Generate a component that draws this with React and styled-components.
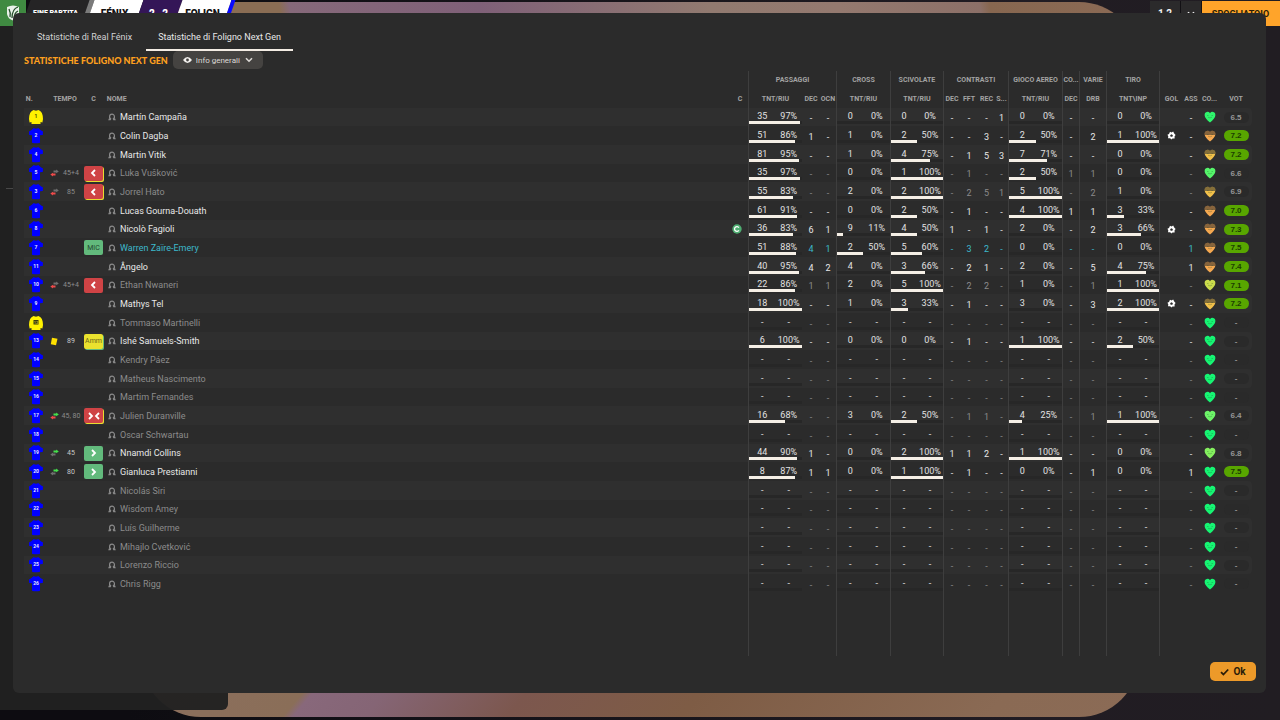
import React, { useState } from "react"
import styled, { createGlobalStyle, css } from "styled-components"

const GlobalStyle = createGlobalStyle`
  * {
    box-sizing: border-box;
  }
  body {
    margin: 0;
    background: #151218;
    color: #e6e6e6;
    font-family: Roboto, "Liberation Sans", sans-serif;
    font-size: 9px;
  }
  button, select {
    font-family: inherit;
    border: 0;
    margin: 0;
  }
`

const Screen = styled.div`
  position: relative;
  display: flex;
  flex-direction: column;
  min-height: 100vh;
  overflow: hidden;
  background: linear-gradient(90deg, #0d0c11 0%, #0d0c11 10%, #211c23 80%, #211d22 100%);
`

const Pitch = styled.div`
  position: absolute;
  inset: 2px 11% 3px 11%;
  border-radius: 60px;
  background:
    linear-gradient(80deg, #8a6d54 14%, #86697a 15%, #7f6078 34%, #917a70 57%, #94796f 70%, #8c7068 84%, #876750 85%, #8b6a55 100%) top / 100% 14px no-repeat,
    linear-gradient(130deg, #8c6f5e 0, #8a6e58 16%, #88687b 17%, #856575 24%, #7c574e 38%, #7e5c45 55%, #8a6a54 85%, #8b6b56 100%) bottom / 100% 26px no-repeat,
    #8a6b56;
`

const TopBar = styled.header`
  position: relative;
  display: flex;
  height: 26px;
  overflow: hidden;
`

const Segment = styled.div`
  position: relative;
  isolation: isolate;
  display: flex;
  align-items: center;
  justify-content: center;
  width: ${p => p.$width}px;
  color: ${p => p.$color || "#fff"};
  font-size: ${p => p.$size || 10}px;
  font-weight: 900;
  white-space: pre;
  &::before {
    content: "";
    position: absolute;
    inset: 0;
    z-index: -1;
    background: ${p => p.$bg};
    transform: skewX(-19deg);
  }
`

const Crest = styled.div`
  display: flex;
  align-items: center;
  justify-content: center;
  width: 26px;
  background: #3f8a41;
`

const TopActions = styled.div`
  display: flex;
  margin-left: auto;
  padding-top: 1px;
`

const TopButton = styled.button`
  display: flex;
  align-items: center;
  justify-content: center;
  width: ${p => p.$width}px;
  padding: 0;
  border-right: 1px solid ${p => (p.$accent ? "#ffa42a" : "#121014")};
  background: ${p => (p.$accent ? "#ffa42a" : "#2b2a2b")};
  color: ${p => (p.$accent ? "#2a1c06" : "#f2f2f2")};
  font-size: ${p => (p.$accent ? 9 : 10)}px;
  font-weight: 700;
  white-space: nowrap;
`

const SidePanel = styled.aside`
  position: relative;
  flex: 1;
  width: 228px;
  margin-bottom: 10px;
  padding-top: 162px;
  border-radius: 0 0 6px 0;
  background: rgba(33, 33, 33, 0.96);
`

const PanelRule = styled.hr`
  width: 12px;
  height: 1px;
  margin: 0 0 0 6px;
  border: 0;
  background: #484848;
`

const Overlay = styled.div`
  position: fixed;
  inset: 0;
  display: flex;
  padding: 13px 14px 27px 13px;
`

const Modal = styled.main`
  display: flex;
  flex-direction: column;
  flex: 1;
  min-width: 0;
  padding: 10px 10px 12px 11px;
  border-radius: 6px;
  background: #2b2b2b;
`

const Tabs = styled.div`
  display: flex;
  gap: 2px;
  padding-left: 1px;
`

const Tab = styled.button`
  height: 28px;
  padding: 2px 12px 0;
  border-bottom: 2px solid ${p => (p.$active ? "#f3ece4" : "transparent")};
  background: none;
  color: ${p => (p.$active ? "#e8e8e8" : "#d2d2d2")};
  font-size: 9px;
`

const TitleRow = styled.div`
  display: flex;
  align-items: center;
  gap: 5px;
  height: 20px;
  padding-bottom: 2px;
`

const Title = styled.h1`
  margin: 0;
  color: #ffa01e;
  font-family: Lato, sans-serif;
  font-size: 9px;
  font-weight: 900;
`

const ViewPicker = styled.label`
  display: flex;
  align-items: center;
  gap: 4px;
  width: 90px;
  height: 18px;
  padding: 0 10px;
  border-radius: 5px;
  background: #454341;
  color: #dcd9d6;
  select {
    flex: 1;
    min-width: 0;
    padding: 0;
    appearance: none;
    background: none;
    color: inherit;
    font-size: 8px;
  }
`

const TableWrap = styled.div`
  flex: 1;
  min-height: 0;
  margin-right: 4px;
  overflow: hidden;
`

const Table = styled.table`
  width: 100%;
  height: 100%;
  table-layout: fixed;
  border-collapse: separate;
  border-spacing: 0;
  text-align: center;
`

const line = css`
  border-left: ${p => (p.$line ? "1px solid #3e3e3e" : "0")};
`

const Th = styled.th`
  ${line}
  height: ${p => (p.$group ? 18 : 19)}px;
  padding: 0;
  overflow: hidden;
  color: #a3a3a3;
  font-size: 7px;
  font-weight: 700;
  line-height: 10px;
  white-space: nowrap;
  text-align: ${p => p.$align || "center"};
`

const Row = styled.tr`
  height: 19px;
  color: ${p => ({ dim: "#8b8b8b", on: "#e8e8e8", picked: "#3cb9cc" })[p.$tone]};
  &:nth-child(3n + 1) {
    height: 18px;
  }
  &:nth-child(odd) td {
    background: #2f2f2f;
  }
  td:last-child {
    border-radius: 0 4px 4px 0;
  }
`

const Td = styled.td`
  ${line}
  padding: ${p => (p.$stat ? "2px 0 0" : "0")};
  line-height: 10px;
  vertical-align: middle;
  white-space: nowrap;
`

const Filler = styled.td`
  ${line}
  padding: 0;
`

const Center = styled.div`
  display: flex;
  align-items: center;
  justify-content: center;
`

const Tempo = styled.div`
  display: grid;
  grid-template-columns: 12px 1fr;
  align-items: center;
  justify-items: center;
  color: ${p => (p.$bright ? "#c8c8c8" : "#8b8b8b")};
  font-size: 7px;
`

const Status = styled.div`
  display: flex;
  align-items: center;
  justify-content: center;
  width: 19px;
  height: 15px;
  margin: 0 auto;
  border-radius: 2px;
  background: ${p => ({ out: "#cf4345", in: "#62ba7c", booked: "#eae22e" })[p.$kind]};
  box-shadow: ${p => (p.$edge ? `1px 1px 0 ${p.$edge}` : "none")};
  color: ${p => ({ out: "#fff", in: "#23462e", booked: "#69661a" })[p.$kind]};
  font-size: 7px;
`

const Player = styled.div`
  display: flex;
  align-items: center;
  gap: 4px;
  padding-left: 3px;
`

const Pair = styled.div`
  display: grid;
  grid-template-columns: 1fr 1fr;
  padding-top: 1px;
  color: #e2e2e2;
`

const Track = styled.div`
  grid-column: 1 / 3;
  height: 3px;
  background: #272727;
`

const Bar = styled.div`
  height: 3px;
  background: #f5efe6;
`

const Vote = styled.div`
  width: 25px;
  height: 11px;
  margin: 0 auto;
  border-radius: 6px;
  background: ${p => (p.$good ? "#58a600" : "#2a2a2a")};
  color: ${p => (p.$good ? "#1c3d02" : "#959595")};
  font-family: "Liberation Sans", sans-serif;
  font-size: 8px;
  font-weight: 700;
  line-height: 12px;
`

const Footer = styled.footer`
  display: flex;
  justify-content: flex-end;
  padding-top: 6px;
`

const OkButton = styled.button`
  display: flex;
  align-items: center;
  justify-content: center;
  gap: 4px;
  width: 46px;
  height: 19px;
  padding: 0;
  border-radius: 5px;
  background: #ed9a29;
  color: #2b1d08;
  font-size: 10px;
  font-weight: 700;
`

const Icon = styled.svg`
  display: block;
  flex: none;
`

const Shirt = ({ n, keeper }) => (
  <Icon width="14" height="16" viewBox="0 0 14 16">
    {keeper ? (
      <path d="M4.500 1 7 1.800 9.500 1C12.500 2 14 5 14 10L13.400 13.500 11.500 13V15H2.500V13L.6 13.500 0 10C0 5 1.500 2 4.500 1Z" fill="#fff200" />
    ) : (
      <path d="M4.800 0Q7 1.500 9.200 0L12.200 2.400 14 3.400 13.800 7 11 7.300V14.800Q7 15.800 3 14.800V7.300L.2 7 0 3.400 1.800 2.400Z" fill="#0000ff" />
    )}
    {keeper && n > 9 && <rect x="4.500" y="5" width="5" height="4.500" fill="#3a390c" />}
    <text x="7" y="9" textAnchor="middle" fontSize={keeper && n > 9 ? 4 : 5} fontWeight="700" fill={keeper ? (n > 9 ? "#b8b02c" : "#4a4700") : "#e6e6ff"}>
      {n}
    </text>
  </Icon>
)

const Swap = ({ kind }) => (
  <Icon width="9" height="8" viewBox="0 0 9 8">
    <path d="M3.500 1.600H6.200V.6L8.800 2.400 6.200 4.200V3.500H3.500Z" fill={kind === "out" ? "#6f6f6f" : "#45df4c"} />
    <path d="M5.500 6.500H3V7.400L.3 5.600 3 3.800V4.500H5.500Z" fill={kind === "in" ? "#6f6f6f" : "#f04a4a"} />
  </Icon>
)

const Card = () => (
  <Icon width="8" height="9" viewBox="0 0 8 9">
    <path d="M2 .8 7.500 1.800 6 8.200.8 7.200Z" fill="#ffe000" />
  </Icon>
)

const Arrow = ({ left }) => (
  <Icon width="7" height="8" viewBox="0 0 7 8">
    <path d={left ? "M5 1 2 4 5 7" : "M2 1 5 4 2 7"} fill="none" stroke="#fff" strokeWidth="1.800" />
  </Icon>
)

const Face = () => (
  <Icon width="8" height="8" viewBox="0 0 8 8">
    <path d="M1.600 5V3.600A2.400 2.400 0 0 1 6.400 3.600V5" fill="none" stroke="#8a8a8a" strokeWidth="1.200" />
    <path d="M.2 7.200Q.4 5.200 2.400 4.600L3.400 5.800 2.600 7.200ZM7.800 7.200Q7.600 5.200 5.600 4.600L4.600 5.800 5.400 7.200Z" fill="#8a8a8a" />
  </Icon>
)

const Captain = () => (
  <Icon width="10" height="10" viewBox="0 0 10 10">
    <circle cx="5" cy="5" r="4.700" fill="#4fae72" />
    <path d="M6.900 3.600A2.400 2.400 0 1 0 6.900 6.400" fill="none" stroke="#fff" strokeWidth="1.300" />
  </Icon>
)

const Ball = () => (
  <Icon width="9" height="9" viewBox="0 0 9 9">
    <path d="M3 .8 4.500 1.500 6.200.6 7.200 2.600 8.600 3.900 7.600 5.300 7.600 7.400 5.500 7.400 4.300 8.500 3.200 7.300 1 7.200 1.300 5.200.4 3.800 2 2.900Z" fill="#fff" />
    <path d="M4.500 3.200 5.900 4.200 5.400 5.800H3.600L3.100 4.200Z" fill="#2b2b2b" />
  </Icon>
)

const heartPath = "M6 11.500C3 9 .6 6.800.6 4A2.900 2.900 0 0 1 6 2.300 2.900 2.900 0 0 1 11.400 4C11.400 6.800 9 9 6 11.500Z"

// worn players keep only the lower part of the heart lit
const Heart = ({ color, worn }) => (
  <Icon width="12" height="12" viewBox="0 0 12 12">
    <path d={heartPath} fill={color} />
    {worn && <path d="M.6 4A2.900 2.900 0 0 1 6 2.300 2.900 2.900 0 0 1 11.400 4L11.200 5H.8Z" fill="#2b2b2b" opacity=".55" />}
    <path d="M3 4.500H4.500M7.500 4.500H9M4 6.200Q6 7.600 8 6.200" fill="none" stroke="#1d4a2b" strokeWidth=".7" opacity=".4" />
  </Icon>
)

const Chevron = () => (
  <Icon width="8" height="6" viewBox="0 0 8 6">
    <path d="M1 1.200 4 4.200 7 1.200" fill="none" stroke="currentColor" strokeWidth="1.600" />
  </Icon>
)

const Eye = () => (
  <Icon width="9" height="8" viewBox="0 0 9 8">
    <path d="M0 4Q4.500-2.200 9 4 4.500 10.200 0 4Z" fill="#f4f1ee" />
    <circle cx="4.500" cy="4" r="1.400" fill="#454341" />
  </Icon>
)

const GREEN = "#16f573"
const LIME = "#6df468"
const ORANGE = "#f5a850"
const GOLD = "#f2c04a"

const YELLOW_EDGE = "#e8dc30"

// stats: passes, dec, ocn, crosses, tackles, dec, fft, rec, s, aerials, dec, drb, shots
const players = [
  { n: 1, keeper: true, name: "Martín Campaña", tone: "on", stats: "35/97 - - 0/0 0/0 - - - 1 0/0 - - 0/0", heart: "#2ff56c", vote: "6.5" },
  { n: 2, name: "Colin Dagba", tone: "on", stats: "51/86 1 - 1/0 2/50 - - 3 - 2/50 - 2 1/100", goal: true, heart: ORANGE, worn: true, vote: "7.2" },
  { n: 4, name: "Martin Vitík", tone: "on", stats: "81/95 - - 1/0 4/75 - 1 5 3 7/71 - - 0/0", heart: GOLD, worn: true, vote: "7.2" },
  { n: 5, name: "Luka Vušković", tone: "dim", swap: "out", time: "45+4", status: "out", edge: YELLOW_EDGE, stats: "35/97 - - 0/0 1/100 - 1 - - 2/50 1 1 0/0", heart: "#55f56a", vote: "6.6" },
  { n: 3, name: "Jorrel Hato", tone: "dim", swap: "out", time: "85", status: "out", edge: YELLOW_EDGE, stats: "55/83 - - 2/0 2/100 - 2 5 1 5/100 - 2 1/0", heart: GOLD, worn: true, vote: "6.9" },
  { n: 6, name: "Lucas Gourna-Douath", tone: "on", stats: "61/91 - - 0/0 2/50 - 1 - - 4/100 1 1 3/33", heart: ORANGE, worn: true, vote: "7.0" },
  { n: 8, name: "Nicolò Fagioli", tone: "on", captain: true, stats: "36/83 6 1 9/11 4/50 1 - 1 - 2/0 - 2 3/66", goal: true, heart: ORANGE, worn: true, vote: "7.3" },
  { n: 7, name: "Warren Zaïre-Emery", tone: "picked", status: "in", label: "MIC", stats: "51/88 4 1 2/50 5/60 - 3 2 - 0/0 - - 0/0", assists: "1", heart: ORANGE, worn: true, vote: "7.5" },
  { n: 11, name: "Ângelo", tone: "on", stats: "40/95 4 2 4/0 3/66 - 2 1 - 2/0 - 5 4/75", assists: "1", heart: ORANGE, worn: true, vote: "7.4" },
  { n: 10, name: "Ethan Nwaneri", tone: "dim", swap: "out", time: "45+4", status: "out", stats: "22/86 1 1 2/0 5/100 - 2 2 - 1/0 - 1 1/100", heart: "#cbdc4c", vote: "7.1" },
  { n: 9, name: "Mathys Tel", tone: "on", stats: "18/100 - - 1/0 3/33 - 1 - - 3/0 - 3 2/100", goal: true, heart: GOLD, worn: true, vote: "7.2" },
  { n: 12, keeper: true, name: "Tommaso Martinelli", tone: "dim" },
  { n: 13, name: "Ishé Samuels-Smith", tone: "on", card: true, time: "89", status: "booked", label: "Amm", edge: "#62ba7c", stats: "6/100 - - 0/0 0/0 - 1 - - 1/100 - - 2/50" },
  { n: 14, name: "Kendry Páez", tone: "dim" },
  { n: 15, name: "Matheus Nascimento", tone: "dim" },
  { n: 16, name: "Martim Fernandes", tone: "dim" },
  { n: 17, name: "Julien Duranville", tone: "dim", swap: "both", time: "45, 80", status: "out", edge: YELLOW_EDGE, stats: "16/68 - - 3/0 2/50 - 1 1 - 4/25 - 1 1/100", heart: LIME, vote: "6.4" },
  { n: 18, name: "Oscar Schwartau", tone: "dim" },
  { n: 19, name: "Nnamdi Collins", tone: "on", swap: "in", time: "45", status: "in", stats: "44/90 1 - 0/0 2/100 1 1 2 - 1/100 - - 0/0", heart: "#84ef5e", vote: "6.8" },
  { n: 20, name: "Gianluca Prestianni", tone: "on", swap: "in", time: "80", status: "in", stats: "8/87 1 1 0/0 1/100 - 1 - - 0/0 - 1 0/0", assists: "1", vote: "7.5" },
  { n: 21, name: "Nicolás Siri", tone: "dim" },
  { n: 22, name: "Wisdom Amey", tone: "dim" },
  { n: 23, name: "Luís Guilherme", tone: "dim" },
  { n: 24, name: "Mihajlo Cvetković", tone: "dim" },
  { n: 25, name: "Lorenzo Riccio", tone: "dim" },
  { n: 26, name: "Chris Rigg", tone: "dim" },
]

const noStats = "-/- - - -/- -/- - - - - -/- - - -/-"

const columns = [
  { label: "N.", width: 24, align: "left" },
  { label: "TEMPO", width: 34 },
  { label: "C", width: 23 },
  { label: "NOME", align: "left" },
  { label: "C", width: 16 },
  { label: "TNT/RIU", width: 54, line: true },
  { label: "DEC", width: 18 },
  { label: "OCN", width: 16 },
  { label: "TNT/RIU", width: 54, line: true },
  { label: "TNT/RIU", width: 53, line: true },
  { label: "DEC", width: 17, line: true },
  { label: "FFT", width: 18 },
  { label: "REC", width: 17 },
  { label: "S...", width: 13 },
  { label: "TNT/RIU", width: 54, line: true },
  { label: "DEC", width: 17, line: true },
  { label: "DRB", width: 27, line: true },
  { label: "TNT\\INP", width: 53, line: true },
  { label: "GOL", width: 24, line: true },
  { label: "ASS", width: 16 },
  { label: "CO...", width: 21 },
  { label: "VOT", width: 32 },
]

const groups = [
  { label: "", span: 5 },
  { label: "PASSAGGI", span: 3, line: true },
  { label: "CROSS", span: 1, line: true },
  { label: "SCIVOLATE", span: 1, line: true },
  { label: "CONTRASTI", span: 4, line: true },
  { label: "GIOCO AEREO", span: 1, line: true },
  { label: "CO...", span: 1, line: true },
  { label: "VARIE", span: 1, line: true },
  { label: "TIRO", span: 1, line: true },
  { label: "", span: 4, line: true },
]

const StatCell = ({ value, line }) => {
  if (!value.includes("/")) return <Td $stat $line={line}>{value}</Td>
  const [total, rate] = value.split("/")
  return (
    <Td $line={line}>
      <Pair>
        <span>{total}</span>
        <span>{rate === "-" ? "-" : `${rate}%`}</span>
        <Track>
          <Bar style={{ width: `${Number(rate) || 0}%` }} />
        </Track>
      </Pair>
    </Td>
  )
}

const PlayerRow = ({ player }) => {
  const { n, keeper, name, tone, swap, card, time, status, label, edge, captain, goal, worn } = player
  const vote = player.vote || "-"
  return (
    <Row $tone={tone}>
      <Td>
        <Center>
          <Shirt n={n} keeper={keeper} />
        </Center>
      </Td>
      <Td>
        {time && (
          <Tempo $bright={tone === "on"}>
            {card ? <Card /> : <Swap kind={swap} />}
            <span>{time}</span>
          </Tempo>
        )}
      </Td>
      <Td>
        {status && (
          <Status $kind={status} $edge={edge}>
            {label}
            {!label && (status === "in" || swap === "both") && <Arrow />}
            {!label && status === "out" && <Arrow left />}
          </Status>
        )}
      </Td>
      <Td>
        <Player>
          <Face />
          {name}
        </Player>
      </Td>
      <Td>
        {captain && <Captain />}
      </Td>
      {(player.stats || noStats).split(" ").map((value, i) => (
        <StatCell key={i} value={value} line={columns[i + 5].line} />
      ))}
      <Td $line>
        {goal && (
          <Center>
            <Ball />
          </Center>
        )}
      </Td>
      <Td $stat>{player.assists || "-"}</Td>
      <Td>
        <Center>
          <Heart color={player.heart || GREEN} worn={worn} />
        </Center>
      </Td>
      <Td>
        <Vote $good={Number(vote) >= 7}>{vote}</Vote>
      </Td>
    </Row>
  )
}

const StatsTable = () => (
  <TableWrap>
    <Table>
      <colgroup>
        {columns.map((c, i) => (
          <col key={i} width={c.width} />
        ))}
      </colgroup>
      <thead>
        <tr>
          {groups.map((g, i) => (
            <Th key={i} $group $line={g.line} colSpan={g.span}>
              {g.label}
            </Th>
          ))}
        </tr>
        <tr>
          {columns.map((c, i) => (
            <Th key={i} $line={c.line} $align={c.align}>
              {c.align ? <>&nbsp;{c.label}</> : c.label}
            </Th>
          ))}
        </tr>
      </thead>
      <tbody>
        {players.map(player => (
          <PlayerRow key={player.n} player={player} />
        ))}
        <tr>
          {columns.map((c, i) => (
            <Filler key={i} $line={c.line} />
          ))}
        </tr>
      </tbody>
    </Table>
  </TableWrap>
)

const Scoreboard = () => (
  <TopBar>
    <Crest>
      <Icon width="14" height="16" viewBox="0 0 14 16">
        <path d="M1 2Q7-1 13 2V9Q12 14 7 15.500 2 14 1 9Z" fill="#e9f2e9" />
        <path d="M3 4Q5 8 4 12M12 2Q6 4 6 13M12 6Q8 8 8.500 13" fill="none" stroke="#234d28" strokeWidth="1.300" />
      </Icon>
    </Crest>
    <Segment $width={59} $bg="#252425" $size={7}>FINE PARTITA</Segment>
    <Segment $width={5} $bg="#7b7b7b" />
    <Segment $width={49} $bg="#fff" $color="#111">FÉNIX</Segment>
    <Segment $width={39} $bg="#341657">2   2</Segment>
    <Segment $width={49} $bg="#fff" $color="#111">FOLIGN</Segment>
    <Segment $width={4} $bg="#0808ff" />
    <TopActions>
      <TopButton $width={31}>1 2</TopButton>
      <TopButton $width={21} aria-label="Menu">
        <Chevron />
      </TopButton>
      <TopButton $width={78} $accent>SPOGLIATOIO</TopButton>
    </TopActions>
  </TopBar>
)

const App = () => {
  const [tab, setTab] = useState(1)
  return (
    <Screen>
      <GlobalStyle />
      <Pitch />
      <Scoreboard />
      <SidePanel>
        <PanelRule />
      </SidePanel>
      <Overlay>
        <Modal>
          <Tabs role="tablist">
            {["Statistiche di Real Fénix", "Statistiche di Foligno Next Gen"].map((label, i) => (
              <Tab key={label} role="tab" aria-selected={tab === i} $active={tab === i} onClick={() => setTab(i)}>
                {label}
              </Tab>
            ))}
          </Tabs>
          <TitleRow>
            <Title>STATISTICHE FOLIGNO NEXT GEN</Title>
            <ViewPicker>
              <Eye />
              <select aria-label="Vista">
                <option>Info generali</option>
              </select>
              <Chevron />
            </ViewPicker>
          </TitleRow>
          <StatsTable />
          <Footer>
            <OkButton>
              <Icon width="9" height="8" viewBox="0 0 9 8">
                <path d="M1 4.200 3.400 6.500 8.200 1.500" fill="none" stroke="currentColor" strokeWidth="1.800" />
              </Icon>
              Ok
            </OkButton>
          </Footer>
        </Modal>
      </Overlay>
    </Screen>
  )
}

export default App
